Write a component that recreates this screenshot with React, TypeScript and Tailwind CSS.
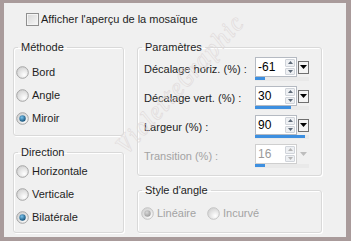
import React from 'react'

const font = { fontFamily: '"Liberation Sans", Arial, sans-serif' }

function Radio({ checked = false, disabled = false }: { checked?: boolean; disabled?: boolean }) {
  const id = checked ? (disabled ? 'rd' : 'rc') : 'ru'
  return (
    <svg width="13" height="13" viewBox="0 0 13 13" className="shrink-0">
      <defs>
        <radialGradient id={`${id}-bg`} cx="0.65" cy="0.7" r="0.7">
          <stop offset="0" stopColor="#ffffff" />
          <stop offset="1" stopColor="#d4d4d4" />
        </radialGradient>
        <radialGradient id={`${id}-dot`} cx="0.4" cy="0.35" r="0.7">
          <stop offset="0" stopColor={disabled ? '#d8d8d8' : '#7cc4ee'} />
          <stop offset="1" stopColor={disabled ? '#9a9a9a' : '#0d4a72'} />
        </radialGradient>
      </defs>
      <circle cx="6.5" cy="6.5" r="5.8" fill={`url(#${id}-bg)`} stroke={disabled ? '#c4c4c4' : '#a5a5a5'} strokeWidth="1" />
      {checked && <circle cx="6.5" cy="6.5" r="3.2" fill={`url(#${id}-dot)`} />}
    </svg>
  )
}

function Group({ title, className, children }: { title: string; className: string; children: React.ReactNode }) {
  return (
    <fieldset className={`rounded-[3px] border border-[#d9d9d9] shadow-[inset_1px_1px_0_#ffffff,1px_1px_0_#ffffff] ${className}`}>
      <legend className="ml-[4px] px-[3px] text-[11px] leading-[14px] text-[#1e1e1e]">{title}</legend>
      {children}
    </fieldset>
  )
}

function Spin({ value, pct, disabled = false }: { value: string; pct: number; disabled?: boolean }) {
  const tri = disabled ? '#b5b5b5' : '#5e6a78'
  return (
    <div className="flex w-[54px] shrink-0 flex-col">
      <div className="flex h-[20px] items-center">
        <div className={`flex h-full flex-1 border bg-white ${disabled ? 'border-[#cfcfcf]' : 'border-[#b5bac2]'}`}>
          <span className={`flex-1 pl-[2px] text-[12px] leading-[18px] ${disabled ? 'text-[#9a9a9a]' : 'text-black'}`}>{value}</span>
          <div className="my-[1px] mr-[1px] flex w-[10px] flex-col gap-px">
            <div className="flex flex-1 items-center justify-center rounded-[1px] border border-[#d0d4da] bg-[#eef0f3]">
              <svg width="5" height="3" viewBox="0 0 5 3"><path d="M0 3L2.5 0L5 3Z" fill={tri} /></svg>
            </div>
            <div className="flex flex-1 items-center justify-center rounded-[1px] border border-[#d0d4da] bg-[#eef0f3]">
              <svg width="5" height="3" viewBox="0 0 5 3"><path d="M0 0L2.5 3L5 0Z" fill={tri} /></svg>
            </div>
          </div>
        </div>
        <div className={`ml-px flex h-[13px] w-[11px] items-center justify-center border ${disabled ? 'border-transparent' : 'border-[#6f6f6f] bg-[#f4f4f4]'}`}>
          <svg width="7" height="4" viewBox="0 0 7 4"><path d="M0 0L3.5 4L7 0Z" fill={disabled ? '#bdbdbd' : '#000'} /></svg>
        </div>
      </div>
      <div className="h-[4px] bg-[#e9e9e9]">
        <div className="h-[3px] bg-[#3d8fe0]" style={{ width: `${pct}%` }} />
      </div>
    </div>
  )
}

function Row({ label, value, pct, disabled = false }: { label: string; value: string; pct: number; disabled?: boolean }) {
  return (
    <div className="flex h-[24px] items-start">
      <span className={`flex-1 whitespace-nowrap pl-[6px] pt-[5px] text-[11px] leading-[14px] ${disabled ? 'text-[#a3a3a3]' : 'text-[#1e1e1e]'}`}>{label}</span>
      <Spin value={value} pct={pct} disabled={disabled} />
    </div>
  )
}

export default function App() {
  return (
    <div className="h-[241px] w-[351px] bg-[#a99b9b] pb-[4px] pl-[4px] pr-[5px] pt-[3px]" style={font}>
      <div className="relative h-full overflow-hidden bg-[#f0f0f0] text-[#1e1e1e]">
        <div className="flex items-center gap-[2px] pl-[22px] pt-[10px]">
          <div className="h-[13px] w-[13px] border border-[#8f8f8f] bg-gradient-to-br from-[#d6d6d6] to-[#f8f8f8] shadow-[inset_0_0_0_1px_#f4f4f4]" />
          <span className="text-[11px] leading-[13px]">Afficher l'aperçu de la mosaïque</span>
        </div>

        <div className="mt-[14px] flex gap-[13px] pl-[9px]">
          <div className="flex w-[111px] flex-col gap-[9px]">
            <Group title="Méthode" className="h-[96px]">
              <div className="flex flex-col gap-[7px] pl-[2px] pt-[10px]">
                {[['Bord', false], ['Angle', false], ['Miroir', true]].map(([l, c]) => (
                  <div key={l as string} className="flex h-[16px] items-center gap-[3px] text-[11px]">
                    <Radio checked={c as boolean} />
                    <span>{l}</span>
                  </div>
                ))}
              </div>
            </Group>
            <Group title="Direction" className="h-[88px]">
              <div className="flex flex-col gap-[7px] pl-[2px] pt-[4px]">
                {[['Horizontale', false], ['Verticale', false], ['Bilatérale', true]].map(([l, c]) => (
                  <div key={l as string} className="flex h-[16px] items-center gap-[3px] text-[11px]">
                    <Radio checked={c as boolean} />
                    <span>{l}</span>
                  </div>
                ))}
              </div>
            </Group>
          </div>

          <div className="flex w-[185px] flex-col gap-[7px]">
            <Group title="Paramètres" className="h-[136px]">
              <div className="flex flex-col gap-[5px] pr-[12px] pt-[3px]">
                <Row label="Décalage horiz. (%) :" value="-61" pct={19} />
                <Row label="Décalage vert. (%) :" value="30" pct={67} />
                <Row label="Largeur (%) :" value="90" pct={92} />
                <Row label="Transition (%) :" value="16" pct={19} disabled />
              </div>
            </Group>
            <Group title="Style d'angle" className="h-[50px]">
              <div className="flex items-center gap-[3px] pl-[3px] pt-[8px] text-[11px] text-[#a3a3a3]">
                <Radio checked disabled />
                <span className="w-[47px]">Linéaire</span>
                <Radio disabled />
                <span>Incurvé</span>
              </div>
            </Group>
          </div>
        </div>

        <div className="pointer-events-none absolute left-[88px] top-[62px] -rotate-[48deg] font-serif text-[26px] italic tracking-[1px] text-transparent [-webkit-text-stroke:0.6px_#e0dada]">
          VioletteGraphic
        </div>
      </div>
    </div>
  )
}
